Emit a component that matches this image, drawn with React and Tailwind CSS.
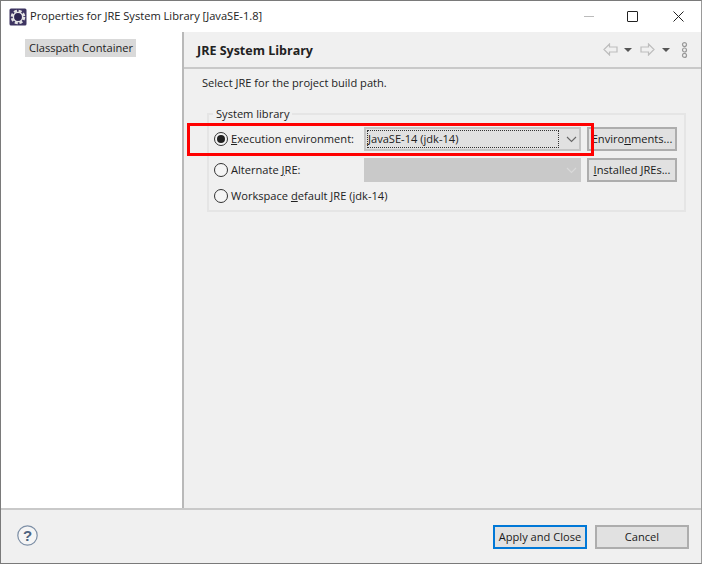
import React from 'react';

const font = { fontFamily: '"Open Sans", sans-serif' };

const Radio = ({ checked }) => (
    <span className="flex-none w-[14px] h-[14px] rounded-full border border-[#333] flex items-center justify-center bg-[#f5f5f5]">
        {checked && <span className="w-[8px] h-[8px] rounded-full bg-[#222]" />}
    </span>
);

const Button = ({ children, className = '', border = 'border-[#adadad]' }) => (
    <div className={`flex items-center justify-center bg-[#e1e1e1] border-2 ${border} text-[11.1px] text-[#1a1a1a] whitespace-nowrap ${className}`}>
        {children}
    </div>
);

const Chevron = ({ color }) => (
    <svg width="11" height="7" viewBox="0 0 11 7" fill="none" stroke={color} strokeWidth="1.1"><path d="M1 1l4.5 4.5L10 1" /></svg>
);

const NavArrow = ({ flip, className = '' }) => (
    <svg width="15" height="13" viewBox="0 0 15 13" fill="#f0f0f0" stroke="#bdbdbd" strokeWidth="1.2" className={className} style={flip ? { transform: 'scaleX(-1)' } : undefined}>
        <path d="M1 6.5l5.5-5.5v3h7.5v5H6.500v3z" />
    </svg>
);

const Caret = ({ className = '' }) => <span className={`w-0 h-0 border-x-4 border-x-transparent border-t-[4px] border-t-[#555] ${className}`} />;

export default function App() {
    return (
        <div className="relative w-[702px] h-[564px] flex flex-col bg-white border border-[#7a7a7a] border-r-[#9a9a9a] text-[#222] overflow-hidden" style={font}>
            <div className="flex-none h-[31px] flex items-center pl-[8px] bg-white">
                <svg width="18" height="18" viewBox="0 0 18 18" className="flex-none">
                    <rect x="0.5" y="0.5" width="17" height="17" rx="1.5" fill="#3d3461" />
                    <circle cx="9" cy="9" r="6" fill="none" stroke="#e4e4e4" strokeWidth="2.6" strokeDasharray="3 1.7" />
                    <circle cx="9" cy="9" r="4.6" fill="none" stroke="#e8e8e8" strokeWidth="1.4" />
                    <circle cx="9" cy="9" r="3.4" fill="#2d2550" />
                </svg>
                <span className="ml-[3px] text-[11.1px] whitespace-nowrap">Properties for JRE System Library [JavaSE-1.8]</span>
                <div className="ml-auto flex items-center h-full">
                    <span className="w-[10px] h-px bg-[#bbb] mr-[33px]" />
                    <span className="w-[11px] h-[11px] border border-[#222] mr-[35px] rounded-[1px]" />
                    <svg width="11" height="11" viewBox="0 0 11 11" stroke="#222" strokeWidth="1" className="mr-[17px]"><path d="M0.5 0.5l10 10M10.5 0.5l-10 10" /></svg>
                </div>
            </div>

            <div className="flex-1 flex min-h-0">
                <div className="flex-none w-[183px] bg-white pt-[7px] pl-[24px] border-r-2 border-r-[#b9b9b9]">
                    <div className="w-[111px] bg-[#d9d9d9] pl-[4px] h-[18px] leading-[17px] text-[11.1px] whitespace-nowrap">Classpath Container</div>
                </div>

                <div className="flex-1 flex flex-col bg-[#f0f0f0] min-w-0">
                    <div className="flex-none h-[37px] flex items-center pl-[13px] border-b-2 border-b-[#c9c9c9]">
                        <span className="mt-[4px] text-[12.5px] font-bold">JRE System Library</span>
                        <div className="ml-auto flex items-center pr-[13px]">
                            <NavArrow />
                            <Caret className="ml-[6px]" />
                            <NavArrow className="ml-[8px]" flip />
                            <Caret className="ml-[7px]" />
                            <svg width="7" height="16" viewBox="0 0 7 16" fill="none" stroke="#999" strokeWidth="1.2" className="ml-[11px]"><circle cx="3.5" cy="2.6" r="2" /><circle cx="3.5" cy="8" r="2" /><circle cx="3.5" cy="13.4" r="2" /></svg>
                        </div>
                    </div>

                    <div className="flex-1 pl-[18px] pr-[15px] pt-[5px]">
                        <div className="text-[11.1px] h-[18px] leading-[18px]">Select JRE for the project build path.</div>
                        <div className="relative mt-[21px] ml-[5px] h-[99px] border-2 border-[#e5e5e5] pl-[5px] pt-[12px]">
                            <span className="absolute -top-[9px] left-[4px] px-[3px] bg-[#f0f0f0] text-[11.1px] leading-[16px]">System library</span>
                            <div className="flex items-center h-[24px]">
                                <Radio checked />
                                <span className="ml-[3px] w-[133px] text-[11.1px] whitespace-nowrap"><span className="underline">E</span>xecution environment:</span>
                                <div className="w-[217px] h-[24px] bg-[#e1e1e1] border-2 border-[#c4c4c4] flex items-center pl-px pr-[2px]">
                                    <span className="flex-1 h-[18px] border border-dotted border-[#333] text-[11.1px] leading-[16px] whitespace-nowrap">JavaSE-14 (jdk-14)</span>
                                    <span className="ml-[7px] flex"><Chevron color="#666" /></span>
                                </div>
                                <Button className="ml-[6px] w-[90px] h-[24px]">Enviro<span className="underline">n</span>ments...</Button>
                            </div>
                            <div className="flex items-center h-[24px] mt-[7px]">
                                <Radio />
                                <span className="ml-[3px] w-[133px] text-[11.1px] whitespace-nowrap">Alternate <span className="underline">J</span>RE:</span>
                                <div className="w-[217px] h-[24px] bg-[#c9c9c9] flex items-center justify-end pr-[4px]">
                                    <Chevron color="#dadada" />
                                </div>
                                <Button className="ml-[6px] w-[90px] h-[24px]"><span className="underline">I</span>nstalled JREs...</Button>
                            </div>
                            <div className="flex items-center h-[14px] mt-[7px]">
                                <Radio />
                                <span className="ml-[3px] text-[11.1px] whitespace-nowrap">Workspace <span className="underline">d</span>efault JRE (jdk-14)</span>
                            </div>
                        </div>
                    </div>
                </div>
            </div>

            <div className="flex-none h-[55px] bg-[#f0f0f0] border-t-2 border-t-[#c9c9c9] flex items-start pt-[15px] pl-[16px] pr-[12px]">
                <svg width="21" height="21" viewBox="0 0 21 21">
                    <circle cx="10.5" cy="10.500" r="9.700" fill="#f5f5f5" stroke="#7d8fa6" strokeWidth="1.2" />
                    <text x="10.5" y="15.500" textAnchor="middle" fontSize="15" fontWeight="700" fill="#4e6480" fontFamily="Liberation Sans, sans-serif">?</text>
                </svg>
                <div className="ml-auto flex gap-[8px]">
                    <Button className="w-[94px] h-[24px]" border="border-[#0078d7]">Apply and Close</Button>
                    <Button className="w-[94px] h-[24px]">Cancel</Button>
                </div>
            </div>

            <div className="absolute left-[186px] top-[122px] w-[407px] h-[33px] border-[3px] border-[#ff0000]" />
        </div>
    );
}
